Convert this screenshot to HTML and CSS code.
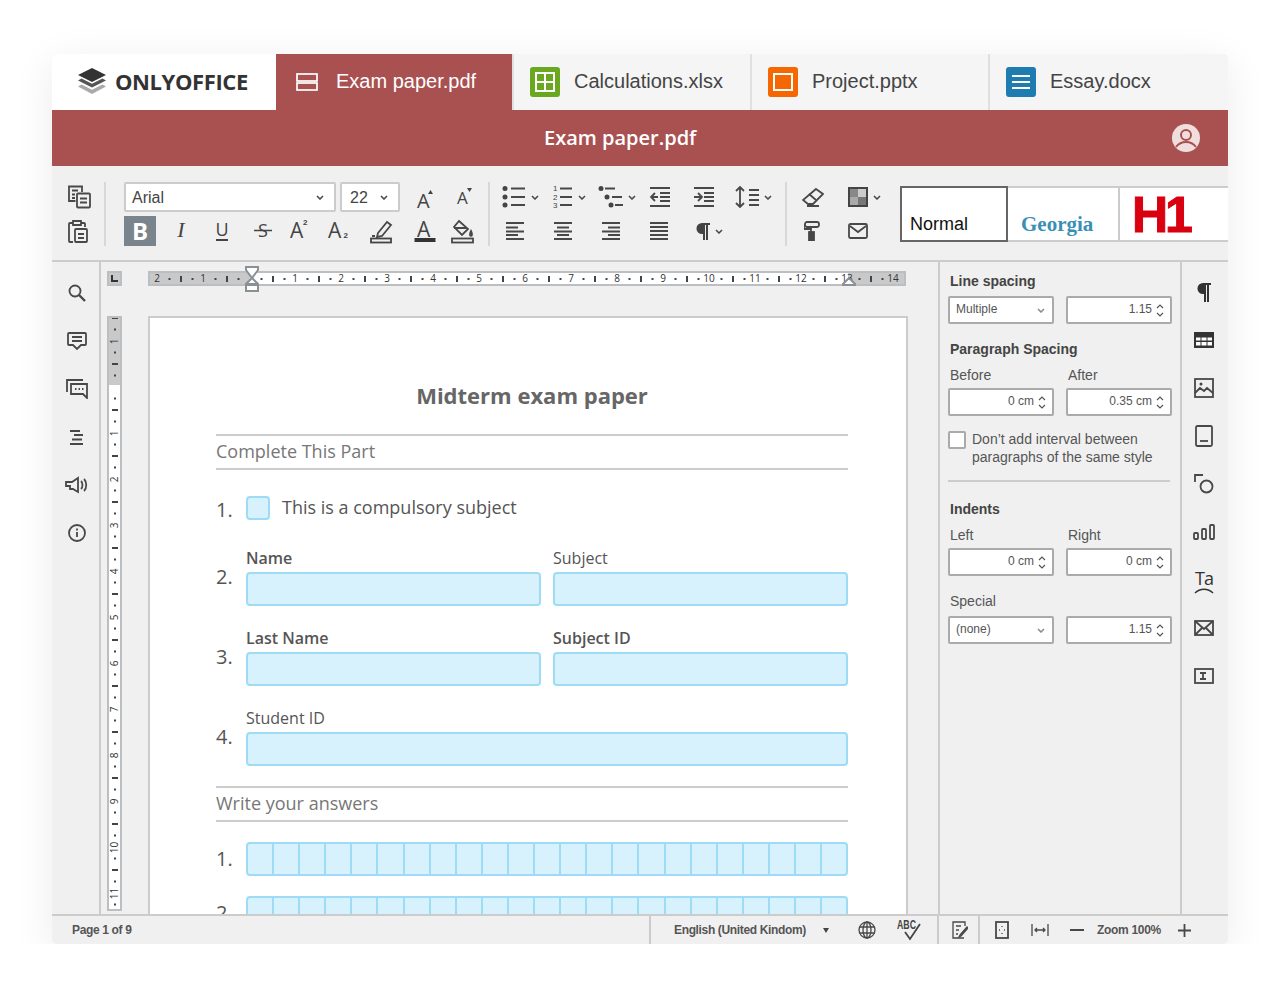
FILE: index.html
```html
<!DOCTYPE html>
<html lang="en">
<head>
  <meta charset="UTF-8">
  <title>Exam paper.pdf</title>
  <link rel="stylesheet" href="styles.css">
</head>
<body>
<div class="window">

  <div class="tabs">
    <div class="logo-tab">
      <svg width="32" height="30" viewBox="0 0 32 30">
        <path d="M16 1 30 8 16 15 2 8z" fill="#333"/>
        <path d="M5.500 11.500 16 16.800 26.500 11.500 30 13.500 16 20.500 2 13.500z" fill="#555"/>
        <path d="M5.500 17.500 16 22.800 26.500 17.500 30 19.500 16 27 2 19.500z" fill="#aaa"/>
      </svg>
      <span class="logo-text">ONLYOFFICE</span>
    </div>
    <div class="tab tab-active">
      <svg width="22" height="18" viewBox="0 0 22 18" fill="none" stroke="#fff" stroke-width="1.700"><rect x="1" y="1" width="20" height="7"/><rect x="1" y="10" width="20" height="7"/></svg>
      <span>Exam paper.pdf</span>
    </div>
    <div class="tab">
      <svg width="30" height="30" viewBox="0 0 30 30"><rect width="30" height="30" rx="3" fill="#69a81f"/><path d="M6 6h18v18H6zM15 6v18M6 15h18" fill="none" stroke="#fff" stroke-width="2"/></svg>
      <span>Calculations.xlsx</span>
    </div>
    <div class="tab">
      <svg width="30" height="30" viewBox="0 0 30 30"><rect width="30" height="30" rx="3" fill="#f56700"/><rect x="6" y="7" width="18" height="16" fill="none" stroke="#fff" stroke-width="2"/></svg>
      <span>Project.pptx</span>
    </div>
    <div class="tab tab-last">
      <svg width="30" height="30" viewBox="0 0 30 30"><rect width="30" height="30" rx="3" fill="#1f7cb0"/><path d="M6 9h18M6 15h18M6 21h18" fill="none" stroke="#fff" stroke-width="2"/></svg>
      <span>Essay.docx</span>
    </div>
  </div>

  <div class="titlebar">
    <span class="doc-title">Exam paper.pdf</span>
    <svg class="avatar" width="28" height="28" viewBox="0 0 28 28">
      <circle cx="14" cy="14" r="14" fill="#f0dddd"/>
      <circle cx="14" cy="11" r="5" fill="none" stroke="#a95151" stroke-width="2"/>
      <path d="M4 23c3-4 6-5 10-5s7 1 10 5" fill="none" stroke="#a95151" stroke-width="2"/>
    </svg>
  </div>

  <div class="toolbar">
    <div class="tool-col">
      <div class="tool-cell">
        <svg class="ic" width="24" height="24" viewBox="0 0 24 24"><path d="M14 7V1.500H1V16h6.500"/><path d="M4 5.500h6M4 9.500h3M4 13h3"/><rect x="9" y="8.500" width="13" height="14" rx="1"/><path d="M12 13.500h7M12 17.500h7"/></svg>
      </div>
      <div class="tool-cell">
        <svg class="ic" width="24" height="24" viewBox="0 0 24 24"><path d="M5 23H2a1 1 0 0 1-1-1V5a1 1 0 0 1 1-1h3M13 4h3a1 1 0 0 1 1 1v3"/><path d="M5 2h8v4H5z"/><rect x="7" y="10" width="12" height="13" rx="1"/><path d="M10 15h6M10 19h6"/></svg>
      </div>
    </div>
    <div class="tool-sep sep-first"></div>

    <div class="font-tools">
      <div class="row-font">
        <div class="combo combo-font"><span>Arial</span><svg class="chev" width="8" height="5" viewBox="0 0 8 5"><path d="M1 1l3 3 3-3"/></svg></div>
        <div class="combo combo-size"><span>22</span><svg class="chev" width="8" height="5" viewBox="0 0 8 5"><path d="M1 1l3 3 3-3"/></svg></div>
        <svg width="20" height="36" viewBox="0 0 20 36"><text x="2" y="28.500" class="glyph-a20">A</text><path d="M13 15l2.500-4 2.500 4z" fill="#444"/></svg>
        <svg width="20" height="36" viewBox="0 0 20 36"><text x="4" y="25" class="glyph-a17">A</text><path d="M14 9h5l-2.500 4z" fill="#444"/></svg>
      </div>
      <div class="row-format">
        <div class="bold-btn">B</div>
        <svg width="20" height="36" viewBox="0 0 20 36"><text x="10" y="24" text-anchor="middle" class="glyph-i">I</text></svg>
        <svg width="16" height="36" viewBox="0 0 16 36"><text x="1.500" y="23" class="glyph-u">U</text><path d="M2 27h12" stroke="#444" stroke-width="2"/></svg>
        <svg width="20" height="36" viewBox="0 0 20 36"><text x="5" y="23.500" class="glyph-u">S</text><path d="M1 17.500h18" stroke="#444" stroke-width="1.500"/></svg>
        <svg width="18" height="36" viewBox="0 0 18 36"><text x="0" y="25" class="glyph-a">A</text><text x="13" y="12" class="glyph-tiny">2</text></svg>
        <svg width="22" height="36" viewBox="0 0 22 36"><text x="1" y="25" class="glyph-a">A</text><text x="16.500" y="25" class="glyph-tiny">2</text></svg>
        <svg class="ic" width="24" height="26" viewBox="0 0 24 26"><path d="M9 15 18 4l4 3-9 11-5 1z"/><path d="M6 18H3"/><rect x="2" y="20.500" width="20" height="4" stroke="#444"/></svg>
        <svg width="22" height="36" viewBox="0 0 22 36"><text x="3" y="24" class="glyph-a">A</text><rect x="0.500" y="25" width="21" height="4" fill="#333"/></svg>
        <svg class="ic" width="24" height="26" viewBox="0 0 24 26"><path d="M9 3l9 8-6 6-8-8z"/><path d="M4 10h13"/><path d="M21 13c1 2 1.500 3 1 4s-2 1-2 0 0-2 1-4z" fill="#444"/><rect x="2" y="20.500" width="21" height="4"/></svg>
      </div>
    </div>
    <div class="tool-sep sep-second"></div>

    <div class="para-tools">
      <div class="row-lists">
        <div class="with-chev">
          <svg class="ic" width="24" height="24" viewBox="0 0 24 24"><circle cx="3" cy="3.500" r="2.500" fill="#444" stroke="none"/><circle cx="3" cy="12" r="2.500" fill="#444" stroke="none"/><circle cx="3" cy="20" r="2.500" fill="#444" stroke="none"/><path d="M9 3.500h14M9 12h14M9 20h14"/></svg>
          <svg class="chev" width="8" height="5" viewBox="0 0 8 5"><path d="M1 1l3 3 3-3"/></svg>
        </div>
        <div class="with-chev">
          <svg class="ic" width="20" height="28" viewBox="0 0 20 28"><text x="0" y="8" class="glyph-num">1</text><text x="0" y="16.500" class="glyph-num">2</text><text x="0" y="25" class="glyph-num">3</text><path d="M7 5.500h12M7 14h12M7 22h12"/></svg>
          <svg class="chev" width="8" height="5" viewBox="0 0 8 5"><path d="M1 1l3 3 3-3"/></svg>
        </div>
        <div class="with-chev">
          <svg class="ic" width="25" height="24" viewBox="0 0 25 24"><circle cx="3" cy="3.500" r="2.500" fill="#444" stroke="none"/><circle cx="9" cy="12" r="2.500" fill="#444" stroke="none"/><circle cx="13" cy="20" r="2.500" fill="#444" stroke="none"/><path d="M7 3.500h10M14 12h10M17 20h8"/></svg>
          <svg class="chev" width="8" height="5" viewBox="0 0 8 5"><path d="M1 1l3 3 3-3"/></svg>
        </div>
        <svg class="ic" width="20" height="22" viewBox="0 0 20 22"><path d="M0 2h20M10 7h10M10 11h10M10 15h10M0 20h20M8 11H1M5 7l-4 4 4 4"/></svg>
        <svg class="ic" width="20" height="22" viewBox="0 0 20 22"><path d="M0 2h20M10 7h10M10 11h10M10 15h10M0 20h20M0 11h7M4 7l4 4-4 4"/></svg>
        <div class="with-chev">
          <svg class="ic" width="24" height="24" viewBox="0 0 24 24"><path d="M5 2v20M1 6l4-4 4 4M1 18l4 4 4-4M14 5h10M14 10h10M14 15h10M14 20h10"/></svg>
          <svg class="chev" width="8" height="5" viewBox="0 0 8 5"><path d="M1 1l3 3 3-3"/></svg>
        </div>
      </div>
      <div class="row-align">
        <svg class="ic" width="18" height="18" viewBox="0 0 18 18"><path d="M0 1h18M0 5.500h12M0 9.500h18M0 13h12M0 17h18"/></svg>
        <svg class="ic" width="18" height="18" viewBox="0 0 18 18"><path d="M0 1h18M3 5.500h12M0 9.500h18M3 13h12M0 17h18"/></svg>
        <svg class="ic" width="18" height="18" viewBox="0 0 18 18"><path d="M0 1h18M6 5.500h12M0 9.500h18M6 13h12M0 17h18"/></svg>
        <svg class="ic" width="18" height="18" viewBox="0 0 18 18"><path d="M0 1h18M0 5h18M0 9h18M0 13h18M0 17h18"/></svg>
        <div class="with-chev">
          <svg width="14" height="18" viewBox="0 0 14 18"><path d="M6 1a5.500 5.500 0 0 0 0 11h1V1z" fill="#444"/><path d="M7 1h7v2h-2v15h-2V3H9v15H7z" fill="#444"/></svg>
          <svg class="chev" width="8" height="5" viewBox="0 0 8 5"><path d="M1 1l3 3 3-3"/></svg>
        </div>
      </div>
    </div>
    <div class="tool-sep sep-third"></div>

    <div class="misc-tools">
      <svg class="ic" width="22" height="20" viewBox="0 0 22 20"><path d="M14 2l7 5-10 10H6l-5-4z"/><path d="M7 7l7 6M5 19h12"/></svg>
      <div class="with-chev">
        <svg width="20" height="20" viewBox="0 0 20 20"><rect x="1" y="1" width="18" height="18" fill="#fff" stroke="#444" stroke-width="2"/><rect x="2" y="2" width="8" height="8" fill="#888"/><rect x="10" y="2" width="8" height="8" fill="#ccc"/><rect x="2" y="10" width="8" height="8" fill="#aaa"/><rect x="10" y="10" width="8" height="8" fill="#777"/></svg>
        <svg class="chev" width="8" height="5" viewBox="0 0 8 5"><path d="M1 1l3 3 3-3"/></svg>
      </div>
      <svg class="ic" width="16" height="20" viewBox="0 0 16 20"><rect x="1" y="1" width="14" height="5" rx="2"/><path d="M1 4H0v4h7v3"/><rect x="5" y="11" width="5" height="9" fill="#444"/></svg>
      <svg class="ic" width="20" height="16" viewBox="0 0 20 16"><rect x="1" y="1" width="18" height="14" rx="1.500"/><path d="M2 3l8 6 8-6"/></svg>
    </div>

    <div class="styles-gallery">
      <div class="style-item style-normal">Normal</div>
      <div class="style-item style-georgia">Georgia</div>
      <div class="style-item style-h1">H1</div>
    </div>
  </div>

  <div class="main">
    <div class="sidebar-left">
      <div class="side-btn"><svg class="ic" width="18" height="18" viewBox="0 0 18 18"><circle cx="7" cy="7" r="5.500"/><path d="M11 11l6 6" stroke-width="2.400"/></svg></div>
      <div class="side-btn"><svg class="ic" width="20" height="18" viewBox="0 0 20 18"><path d="M2 1h16a1 1 0 0 1 1 1v10a1 1 0 0 1-1 1h-4l-4 4-4-4H2a1 1 0 0 1-1-1V2a1 1 0 0 1 1-1z"/><path d="M5 5h10M5 9h10"/></svg></div>
      <div class="side-btn"><svg class="ic" width="22" height="20" viewBox="0 0 22 20"><path d="M17 1H1v12"/><path d="M5 5h16v14l-4-4H5z"/><path d="M9 10h1.500M12.500 10H14M16 10h1.500"/></svg></div>
      <div class="side-btn"><svg class="ic" width="14" height="15" viewBox="0 0 14 15"><path d="M0 1h10M4 5h9M2 9.500h10M0 14h13"/></svg></div>
      <div class="side-btn"><svg class="ic" width="24" height="18" viewBox="0 0 24 18"><path d="M1 6h6l6-4v14l-5-3H5v-3H1z"/><path d="M16 5c2 2 2 6 0 8M19 3c3 3 3 9 0 12"/></svg></div>
      <div class="side-btn"><svg class="ic" width="18" height="18" viewBox="0 0 18 18"><circle cx="9" cy="9" r="8"/><path d="M9 8v5M9 4.500v2"/></svg></div>
    </div>

    <div class="doc-pane">
      <div class="ruler-corner"><svg width="7" height="7" viewBox="0 0 7 7"><path d="M1 0v6h6" fill="none" stroke="#333" stroke-width="2"/></svg></div>
      <div class="h-ruler">
        <div class="h-scale">
          <span>2</span><span>1</span><span></span><span>1</span><span>2</span><span>3</span><span>4</span><span>5</span><span>6</span><span>7</span><span>8</span><span>9</span><span>10</span><span>11</span><span>12</span><span>13</span><span>14</span>
        </div>
        <svg class="marker-left" width="14" height="26" viewBox="0 0 14 26"><path d="M1 1h12v3l-6 8-6-8z" fill="#fff" stroke="#8b9095" stroke-width="2"/><path d="M7 12l6 6H1z" fill="#fff" stroke="#8b9095" stroke-width="2"/><rect x="1" y="19" width="12" height="6" fill="#fff" stroke="#8b9095" stroke-width="2"/></svg>
        <svg class="marker-right" width="14" height="9" viewBox="0 0 14 9"><path d="M7 1l6 6v1H1V7z" fill="#fff" stroke="#8b9095" stroke-width="2"/></svg>
      </div>
      <div class="v-ruler">
        <div class="v-scale">
          <span><i>1</i></span><span></span><span><i>1</i></span><span><i>2</i></span><span><i>3</i></span><span><i>4</i></span><span><i>5</i></span><span><i>6</i></span><span><i>7</i></span><span><i>8</i></span><span><i>9</i></span><span><i>10</i></span><span><i>11</i></span>
        </div>
      </div>
      <div class="page">
        <h1 class="paper-title">Midterm exam paper</h1>
        <div class="part-head">Complete This Part</div>

        <div class="q q-check">
          <span class="q-num">1.</span>
          <div class="check-box"></div>
          <span class="check-text">This is a compulsory subject</span>
        </div>

        <div class="q q-fields">
          <span class="q-num">2.</span>
          <div class="fields">
            <div class="field-wrap"><label class="lbl-strong">Name</label><div class="field"></div></div>
            <div class="field-wrap"><label>Subject</label><div class="field"></div></div>
          </div>
        </div>
        <div class="q q-fields">
          <span class="q-num">3.</span>
          <div class="fields">
            <div class="field-wrap"><label class="lbl-strong">Last Name</label><div class="field"></div></div>
            <div class="field-wrap"><label class="lbl-strong">Subject ID</label><div class="field"></div></div>
          </div>
        </div>
        <div class="q q-fields">
          <span class="q-num">4.</span>
          <div class="fields fields-one">
            <div class="field-wrap"><label>Student ID</label><div class="field"></div></div>
          </div>
        </div>

        <div class="part-head part-answers">Write your answers</div>

        <div class="q q-answer">
          <span class="q-num">1.</span>
          <div class="cells"><b></b><b></b><b></b><b></b><b></b><b></b><b></b><b></b><b></b><b></b><b></b><b></b><b></b><b></b><b></b><b></b><b></b><b></b><b></b><b></b><b></b><b></b><b></b></div>
        </div>
        <div class="q q-answer">
          <span class="q-num">2.</span>
          <div class="cells"><b></b><b></b><b></b><b></b><b></b><b></b><b></b><b></b><b></b><b></b><b></b><b></b><b></b><b></b><b></b><b></b><b></b><b></b><b></b><b></b><b></b><b></b><b></b></div>
        </div>
      </div>
    </div>

    <div class="settings">
      <h3 class="set-title">Line spacing</h3>
      <div class="set-row mt7">
        <div class="ctl ctl-combo"><span>Multiple</span><svg class="chev chev-light" width="8" height="5" viewBox="0 0 8 5"><path d="M1 1l3 3 3-3"/></svg></div>
        <div class="ctl ctl-spin"><span>1.15</span><svg class="spin" width="8" height="15" viewBox="0 0 8 15"><path d="M1 5l3-3 3 3M1 10l3 3 3-3"/></svg></div>
      </div>
      <h3 class="set-title mt17">Paragraph Spacing</h3>
      <div class="set-labels mt10"><span>Before</span><span>After</span></div>
      <div class="set-row mt5">
        <div class="ctl ctl-spin"><span>0 cm</span><svg class="spin" width="8" height="15" viewBox="0 0 8 15"><path d="M1 5l3-3 3 3M1 10l3 3 3-3"/></svg></div>
        <div class="ctl ctl-spin"><span>0.35 cm</span><svg class="spin" width="8" height="15" viewBox="0 0 8 15"><path d="M1 5l3-3 3 3M1 10l3 3 3-3"/></svg></div>
      </div>
      <div class="set-check">
        <div class="set-box"></div>
        <span>Don’t add interval between paragraphs of the same style</span>
      </div>
      <div class="set-line"></div>
      <h3 class="set-title mt19">Indents</h3>
      <div class="set-labels mt10"><span>Left</span><span>Right</span></div>
      <div class="set-row mt5">
        <div class="ctl ctl-spin"><span>0 cm</span><svg class="spin" width="8" height="15" viewBox="0 0 8 15"><path d="M1 5l3-3 3 3M1 10l3 3 3-3"/></svg></div>
        <div class="ctl ctl-spin"><span>0 cm</span><svg class="spin" width="8" height="15" viewBox="0 0 8 15"><path d="M1 5l3-3 3 3M1 10l3 3 3-3"/></svg></div>
      </div>
      <div class="set-labels mt17"><span>Special</span></div>
      <div class="set-row mt7">
        <div class="ctl ctl-combo"><span>(none)</span><svg class="chev chev-light" width="8" height="5" viewBox="0 0 8 5"><path d="M1 1l3 3 3-3"/></svg></div>
        <div class="ctl ctl-spin"><span>1.15</span><svg class="spin" width="8" height="15" viewBox="0 0 8 15"><path d="M1 5l3-3 3 3M1 10l3 3 3-3"/></svg></div>
      </div>
    </div>

    <div class="sidebar-right">
      <div class="side-btn"><svg width="14" height="20" viewBox="0 0 14 20"><path d="M6 1a5.500 5.500 0 0 0 0 11h1V1z" fill="#333"/><path d="M7 1h7v2h-2v17h-2V3H9v17H7z" fill="#333"/></svg></div>
      <div class="side-btn"><svg width="20" height="16" viewBox="0 0 20 16"><rect width="20" height="16" fill="#333"/><path d="M2 5.500h4.500v3H2zM7.500 5.500h5v3h-5zM13.500 5.500H18v3h-4.500zM2 10h4.500v3.500H2zM7.500 10h5v3.500h-5zM13.500 10H18v3.500h-4.500z" fill="#fff"/></svg></div>
      <div class="side-btn"><svg class="ic" width="20" height="20" viewBox="0 0 20 20"><rect x="1" y="1" width="18" height="18"/><path d="M1 15l5-5 4 3 3-3 6 5"/><circle cx="7" cy="6" r="1.500" fill="#444" stroke="none"/></svg></div>
      <div class="side-btn"><svg class="ic" width="18" height="22" viewBox="0 0 18 22"><rect x="1" y="1" width="16" height="20" rx="1.500"/><path d="M5 16h8"/></svg></div>
      <div class="side-btn"><svg class="ic" width="20" height="20" viewBox="0 0 20 20"><path d="M1 8V1h8"/><circle cx="12.500" cy="12.500" r="6"/></svg></div>
      <div class="side-btn"><svg class="ic" width="22" height="16" viewBox="0 0 22 16"><rect x="1" y="9" width="4" height="6" rx="1"/><rect x="9" y="5" width="4" height="10" rx="1"/><rect x="17" y="1" width="4" height="14" rx="1"/></svg></div>
      <div class="side-btn"><svg width="22" height="34" viewBox="0 0 22 34"><text x="2" y="22" class="glyph-ta">Ta</text><path d="M2 30c5-5 13-5 18 0" fill="none" stroke="#333" stroke-width="1.500"/></svg></div>
      <div class="side-btn"><svg class="ic" width="20" height="16" viewBox="0 0 20 16"><rect x="1" y="1" width="18" height="14"/><path d="M1 1l9 8 9-8M1 15l7-7M19 15l-7-7"/></svg></div>
      <div class="side-btn"><svg class="ic" width="20" height="16" viewBox="0 0 20 16"><rect x="1" y="1" width="18" height="14"/><path d="M6 5h6M6 11h6M9 5v6"/></svg></div>
    </div>
  </div>

  <div class="statusbar">
    <div class="st-page">Page 1 of 9</div>
    <div class="st-lang">
      <span class="st-lang-name">English (United Kindom)</span>
      <svg width="8" height="5" viewBox="0 0 8 5" class="st-caret"><path d="M1 0h6L4 5z" fill="#444"/></svg>
      <svg class="ic ic-thin st-globe" width="18" height="18" viewBox="0 0 18 18"><circle cx="9" cy="9" r="8"/><ellipse cx="9" cy="9" rx="4" ry="8"/><path d="M9 1v16M1.500 6h15M1.500 12h15"/></svg>
      <svg class="st-abc" width="26" height="24" viewBox="0 0 26 24"><text x="0" y="11" textLength="19" lengthAdjust="spacingAndGlyphs" class="glyph-abc">ABC</text><path d="M8 14l5 7 10-15" fill="none" stroke="#444" stroke-width="1.800"/></svg>
    </div>
    <div class="st-track">
      <svg class="ic ic-thin" width="16" height="18" viewBox="0 0 16 18"><path d="M13 5V1H1v16h11"/><path d="M4 5h5M4 9h3M4 13h2"/><path d="M8 14l7-8 1 1-7 8-2 1z"/></svg>
    </div>
    <div class="st-zoom">
      <svg class="ic" width="14" height="18" viewBox="0 0 14 18"><rect x="1" y="1" width="12" height="16"/><path d="M7 5v1M5 9H4M10 9H9M7 12v1" stroke="#777"/></svg>
      <svg class="ic ic-thin st-fit" width="18" height="14" viewBox="0 0 18 14"><path d="M1 1v12M17 1v12M4 7h10M6 5L4 7l2 2M12 5l2 2-2 2"/></svg>
      <svg class="ic st-minus" width="14" height="2" viewBox="0 0 14 2"><path d="M0 1h14"/></svg>
      <span class="st-zoom-val">Zoom 100%</span>
      <svg class="ic st-plus" width="13" height="13" viewBox="0 0 13 13"><path d="M0 6.500h13M6.500 0v13"/></svg>
    </div>
  </div>

</div>
</body>
</html>
```

FILE: styles.css
```css
* {
  box-sizing: border-box;
}

body {
  margin: 0;
  background-color: #fff;
  font-family: "Liberation Sans", Arial, sans-serif;
  color: #444;
}

.window {
  width: 1176px;
  height: 890px;
  margin: 54px auto 0;
  border-radius: 5px;
  overflow: hidden;
  background-color: #f0f0f0;
  box-shadow: 0 8px 40px rgba(0, 0, 0, 0.08);
}

/* icons */
.ic {
  fill: none;
  stroke: #484848;
  stroke-width: 1.8;
}

.ic-thin {
  stroke-width: 1.3;
}

.chev {
  fill: none;
  stroke: #444;
  stroke-width: 1.5;
}

.chev-light {
  stroke: #888;
}

.with-chev {
  display: flex;
  align-items: center;
  gap: 5px;
}

.glyph-a {
  font: 21px "Open Sans", sans-serif;
  fill: #444;
}

.glyph-a20 {
  font: 20px "Open Sans", sans-serif;
  fill: #444;
}

.glyph-a17 {
  font: 17px "Open Sans", sans-serif;
  fill: #444;
}

.glyph-i {
  font: italic 22px "Liberation Serif", serif;
  fill: #444;
}

.glyph-u {
  font: 18px "Open Sans", sans-serif;
  fill: #444;
}

.glyph-tiny {
  font: bold 8px "Liberation Sans", sans-serif;
  fill: #444;
}

.glyph-num {
  font: 8px "Liberation Sans", sans-serif;
  fill: #444;
  stroke: none;
}

.glyph-ta {
  font: 18px "Open Sans", sans-serif;
  letter-spacing: -1px;
  fill: #333;
}

.glyph-abc {
  font: bold 12px "Liberation Sans", sans-serif;
  fill: #444;
}

/* tabs */
.tabs {
  display: flex;
  height: 56px;
  background-color: #f5f5f5;
}

.logo-tab {
  width: 224px;
  display: flex;
  align-items: center;
  gap: 7px;
  padding-left: 24px;
  background-color: #fff;
}

.logo-text {
  padding-bottom: 2px;
  font: 700 22px "Open Sans", sans-serif;
  letter-spacing: -0.4px;
  color: #333;
}

.tab {
  width: 238px;
  display: flex;
  align-items: center;
  gap: 14px;
  padding-left: 16px;
  border-left: 2px solid #e0e0e0;
  font-size: 20px;
  color: #444;
}

.tab span {
  padding-bottom: 2px;
}

.tab-active {
  width: 236px;
  gap: 18px;
  padding-left: 20px;
  border-left: 0;
  background-color: #a95151;
  color: #fff;
}

.tab-last {
  width: 240px;
}

/* title bar */
.titlebar {
  height: 56px;
  display: flex;
  align-items: center;
  padding-left: 492px;
  padding-right: 28px;
  background-color: #a95151;
}

.doc-title {
  padding-bottom: 2px;
  font: 600 20px "Open Sans", sans-serif;
  color: #fff;
}

.avatar {
  margin-left: auto;
}

/* toolbar */
.toolbar {
  height: 96px;
  display: flex;
  align-items: flex-start;
  padding: 16px 0 0 16px;
  border-bottom: 2px solid #ccc;
}

.tool-col {
  width: 24px;
  display: grid;
  grid-template-rows: 30px 30px;
  row-gap: 4px;
}

.tool-cell {
  display: flex;
  align-items: center;
  justify-content: center;
}

.tool-sep {
  width: 2px;
  height: 64px;
  background-color: #d8d8d8;
}

.sep-first {
  margin: 0 18px 0 12px;
}

.sep-second {
  margin-left: 12px;
}

.sep-third {
  margin-left: 0;
}

.font-tools {
  width: 352px;
  display: grid;
  grid-template-rows: 30px 30px;
  row-gap: 4px;
}

.row-font {
  display: grid;
  grid-template-columns: 216px 60px 50px 26px;
  grid-template-rows: 30px;
  align-items: center;
  justify-items: center;
}

.row-format {
  display: grid;
  grid-template-columns: 32px 49px 34px 48px 24px 54px 32px 55px 19px;
  grid-template-rows: 30px;
  align-items: center;
  justify-items: center;
}

.combo {
  height: 30px;
  display: flex;
  align-items: center;
  justify-content: space-between;
  border: 2px solid #ccc;
  border-radius: 2px;
  background-color: #fff;
  font-size: 16px;
}

.combo span {
  padding-top: 2px;
}

.combo-font {
  width: 212px;
  justify-self: start;
  padding: 0 10px 0 6px;
}

.combo-size {
  width: 60px;
  padding: 0 10px 0 8px;
}

.bold-btn {
  width: 32px;
  height: 30px;
  background-color: #7a848c;
  color: #fff;
  font: 700 24px/30px "Open Sans", sans-serif;
  text-align: center;
}

.para-tools {
  width: 295px;
  display: grid;
  grid-template-rows: 30px 30px;
  row-gap: 4px;
  padding-left: 12px;
}

.row-lists {
  display: grid;
  grid-template-columns: 51px 45px 52px 44px 41px auto;
  grid-template-rows: 30px;
  align-items: center;
  justify-items: start;
}

.row-align {
  display: grid;
  grid-template-columns: 48px 48px 48px 46px auto;
  grid-template-rows: 30px;
  align-items: center;
  justify-items: start;
  padding-left: 4px;
}

.misc-tools {
  width: 113px;
  display: grid;
  grid-template-columns: 46px auto;
  grid-template-rows: 30px 30px;
  row-gap: 4px;
  align-items: center;
  justify-items: start;
  padding-left: 15px;
}

.misc-tools > :nth-child(3) {
  margin-left: 2px;
}

.styles-gallery {
  flex: 1;
  min-width: 0;
  height: 56px;
  margin-top: 4px;
  display: flex;
  border-top: 2px solid #ccc;
  border-bottom: 2px solid #ccc;
  background-color: #fff;
}

.style-item {
  flex: 0 0 112px;
  border-right: 2px solid #ccc;
}

.style-normal {
  flex-basis: 108px;
  margin-top: -2px;
  margin-bottom: -2px;
  padding: 26px 0 0 8px;
  border: 2px solid #666;
  font-size: 18px;
  color: #111;
}

.style-georgia {
  padding: 24px 0 0 13px;
  font: 700 21px "Liberation Serif", serif;
  color: #3a8fb7;
}

.style-h1 {
  flex-basis: 108px;
  border-right: 0;
  padding-left: 12px;
  font: 700 50px/54px "Liberation Sans", sans-serif;
  letter-spacing: -3px;
  color: #d9000f;
  -webkit-text-stroke: 1px #d9000f;
}

/* main area */
.main {
  height: 652px;
  display: flex;
  overflow: hidden;
}

.sidebar-left {
  width: 49px;
  padding: 7px 0 0 3px;
  border-right: 2px solid #ccc;
}

.side-btn {
  height: 48px;
  display: flex;
  align-items: center;
  justify-content: center;
}

.doc-pane {
  width: 839px;
  display: grid;
  grid-template-columns: 15px 26px 760px;
  grid-template-rows: 15px 598px;
  row-gap: 30px;
  padding: 9px 0 0 6px;
  border-right: 2px solid #ccc;
}

.ruler-corner {
  display: flex;
  align-items: center;
  justify-content: center;
  background-color: #c9c9c9;
  border: 2px solid #bcbfc2;
}

.h-ruler {
  grid-column: 3;
  width: 758px;
  position: relative;
}

.h-scale {
  height: 15px;
  display: flex;
  overflow: hidden;
  border: 2px solid #bcbfc2;
  background-image:
    linear-gradient(to right, #444 2px, transparent 2px),
    linear-gradient(to right, #444 2px, transparent 2px),
    linear-gradient(to right, #c9c9c9 100px, #fff 100px, #fff 698px, #c9c9c9 698px);
  background-size: 23px 2px, 46px 6px, 100% 100%;
  background-position: 18.5px center, 30px center, 0 0;
  background-repeat: repeat-x, repeat-x, no-repeat;
  font: 10px/11px "Open Sans", sans-serif;
  color: #333;
}

.h-scale span {
  flex: 0 0 46px;
  text-align: center;
}

.h-scale span:first-child {
  margin-left: -16px;
}

.marker-left {
  position: absolute;
  left: 97px;
  top: -5px;
}

.marker-right {
  position: absolute;
  left: 694px;
  top: 6px;
}

.v-ruler {
  grid-column: 1;
  grid-row: 2;
  height: 595px;
  border: 2px solid #bcbfc2;
  overflow: hidden;
}

.v-scale {
  height: 100%;
  display: flex;
  flex-direction: column;
  background-image:
    linear-gradient(to bottom, #444 2px, transparent 2px),
    linear-gradient(to bottom, #444 2px, transparent 2px),
    linear-gradient(to bottom, #c9c9c9 67px, #fff 67px);
  background-size: 2px 23px, 6px 46px, 100% 100%;
  background-position: center 10.5px, center 45px, 0 0;
  background-repeat: repeat-y, repeat-y, no-repeat;
}

.v-scale span {
  flex: 0 0 46px;
  display: flex;
  align-items: center;
  justify-content: center;
}

.v-scale i {
  font: normal 10px/11px "Open Sans", sans-serif;
  color: #333;
  transform: rotate(-90deg);
}

/* page */
.page {
  grid-column: 3;
  grid-row: 2;
  width: 760px;
  height: 598px;
  overflow: hidden;
  padding: 63px 58px 0 66px;
  border: 2px solid #ccc;
  border-bottom: 0;
  background-color: #fff;
  font-family: "Open Sans", sans-serif;
  color: #555;
}

.paper-title {
  height: 30px;
  margin: 0 0 23px;
  font: 700 22px/28px "Open Sans", sans-serif;
  color: #666;
  text-align: center;
}

.part-head {
  height: 36px;
  border-top: 2px solid #ccc;
  border-bottom: 2px solid #ccc;
  font-size: 18px;
  line-height: 30px;
  color: #777;
}

.part-answers {
  margin-top: 20px;
}

.q {
  display: flex;
}

.q-num {
  flex: 0 0 30px;
  font-size: 20px;
  line-height: 24px;
}

.q-check {
  height: 24px;
  margin-top: 26px;
  align-items: center;
}

.q-check .q-num {
  padding-top: 4px;
}

.check-box {
  width: 24px;
  height: 24px;
  border: 2px solid #9edcf5;
  border-radius: 4px;
  background-color: #d8f2fd;
}

.check-text {
  height: 24px;
  margin-left: 12px;
  font-size: 18px;
  line-height: 22px;
}

.q-fields {
  margin-top: 22px;
}

.q-check + .q-fields {
  margin-top: 28px;
}

.q-fields .q-num {
  padding-top: 17px;
}

.fields {
  flex: 1;
  display: grid;
  grid-template-columns: 295px 295px;
  column-gap: 12px;
}

.fields-one {
  grid-template-columns: 602px;
}

.field-wrap label {
  display: block;
  height: 20px;
  margin-bottom: 4px;
  font-size: 16px;
  line-height: 20px;
}

.field-wrap .lbl-strong {
  font-weight: 600;
}

.field {
  height: 34px;
  border: 2px solid #9edcf5;
  border-radius: 4px;
  background-color: #d8f2fd;
}

.q-answer {
  margin-top: 20px;
  height: 34px;
  align-items: center;
}

.cells {
  width: 602px;
  height: 34px;
  display: grid;
  grid-template-columns: repeat(23, 26.1px);
  overflow: hidden;
  border: 2px solid #9edcf5;
  border-radius: 4px;
  background-color: #d8f2fd;
}

.cells b {
  border-right: 2px solid #9edcf5;
}

.cells b:last-child {
  border-right: 0;
}

/* settings panel */
.settings {
  width: 242px;
  padding: 11px 0 0 8px;
  border-right: 2px solid #ccc;
  font-size: 14px;
  color: #555;
}

.set-title {
  height: 16px;
  margin: 0;
  padding-left: 2px;
  font-size: 14px;
  line-height: 16px;
  font-weight: 700;
  color: #444;
}

.mt5 { margin-top: 5px; }
.mt7 { margin-top: 7px; }
.mt10 { margin-top: 10px; }
.mt17 { margin-top: 17px; }
.mt19 { margin-top: 19px; }

.set-row {
  display: grid;
  grid-template-columns: 106px 106px;
  column-gap: 12px;
}

.set-labels {
  display: grid;
  grid-template-columns: 106px 106px;
  column-gap: 12px;
  padding-left: 2px;
  line-height: 16px;
}

.ctl {
  height: 28px;
  display: flex;
  align-items: center;
  border: 2px solid #aaa;
  border-radius: 2px;
  background-color: #fff;
  font-size: 12px;
  color: #555;
}

.ctl span {
  padding-bottom: 2px;
}

.ctl-combo {
  justify-content: space-between;
  padding: 0 7px 0 6px;
}

.ctl-spin {
  justify-content: flex-end;
  gap: 4px;
  padding-right: 6px;
}

.spin {
  fill: none;
  stroke: #555;
  stroke-width: 1.2;
}

.set-check {
  width: 226px;
  display: flex;
  gap: 6px;
  margin-top: 14px;
  line-height: 18px;
}

.set-box {
  flex: 0 0 18px;
  height: 18px;
  margin-top: 1px;
  border: 2px solid #aaa;
  border-radius: 2px;
  background-color: #fff;
}

.set-line {
  width: 222px;
  height: 2px;
  margin-top: 14px;
  background-color: #ccc;
}

.sidebar-right {
  flex: 1;
  padding: 6px 2px 0 0;
}

/* status bar */
.statusbar {
  height: 30px;
  display: flex;
  align-items: stretch;
  border-top: 2px solid #ccc;
  font-size: 12px;
  font-weight: 700;
  color: #555;
}

.st-page {
  width: 597px;
  padding-left: 20px;
  letter-spacing: -0.35px;
  line-height: 28px;
}

.st-lang {
  width: 288px;
  display: flex;
  align-items: center;
  padding-left: 23px;
  border-left: 2px solid #ccc;
}

.st-lang-name {
  width: 148px;
  letter-spacing: -0.35px;
}

.st-caret {
  margin-right: 28px;
}

.st-abc {
  margin-left: 21px;
}

.st-track {
  width: 41px;
  display: flex;
  align-items: center;
  padding-left: 13px;
  border-left: 2px solid #ccc;
}

.st-zoom {
  flex: 1;
  display: flex;
  align-items: center;
  padding-left: 15px;
  border-left: 2px solid #ccc;
}

.st-fit {
  margin-left: 22px;
}

.st-minus {
  margin-left: 21px;
}

.st-zoom-val {
  margin-left: 13px;
  letter-spacing: -0.3px;
}

.st-plus {
  margin-left: 17px;
}
```
